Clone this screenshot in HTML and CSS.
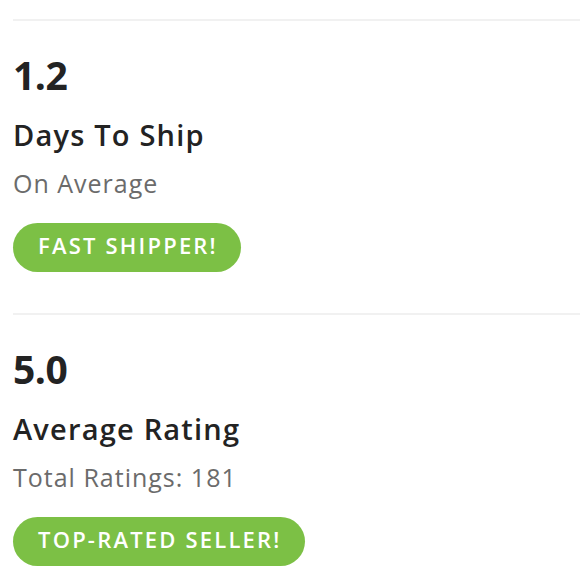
FILE: index.html
```html
<!DOCTYPE html>
<html>
<head>
<meta charset="utf-8">
<link rel="stylesheet" href="styles.css">
</head>
<body>
<div class="page">
  <section class="stat">
    <div class="value">1.2</div>
    <div class="label">Days To Ship</div>
    <div class="sub">On Average</div>
    <div class="badge">FAST SHIPPER!</div>
  </section>
  <section class="stat">
    <div class="value">5.0</div>
    <div class="label">Average Rating</div>
    <div class="sub">Total Ratings: 181</div>
    <div class="badge">TOP-RATED SELLER!</div>
  </section>
</div>
</body>
</html>
```
FILE: styles.css
```css
html, body {
  margin: 0;
  padding: 0;
  background: #ffffff;
}
body {
  font-family: "Open Sans", Lato, "Liberation Sans", sans-serif;
  color: #232323;
}
.page {
  padding: 19px 0 0 13px;
}
.stat {
  border-top: 2px solid #f1f1f1;
  padding-top: 34px;
  height: 294px;
  box-sizing: border-box;
  display: flex;
  flex-direction: column;
  align-items: flex-start;
}
.value {
  font-size: 39px;
  font-weight: 700;
  line-height: 40px;
  letter-spacing: -0.5px;
}
.label {
  margin-top: 23px;
  font-size: 29px;
  font-weight: 600;
  line-height: 34px;
  letter-spacing: 1.2px;
}
.sub {
  margin-top: 16px;
  font-size: 25px;
  font-weight: 400;
  color: #6b6b6b;
  line-height: 30px;
  letter-spacing: 1px;
}
.badge {
  margin-top: 25px;
  background: #7cc045;
  color: #ffffff;
  font-size: 22px;
  font-weight: 600;
  letter-spacing: 2.2px;
  height: 49px;
  box-sizing: border-box;
  line-height: 44px;
  padding: 0 23px 5px 25px;
  border-radius: 25px;
}
```
